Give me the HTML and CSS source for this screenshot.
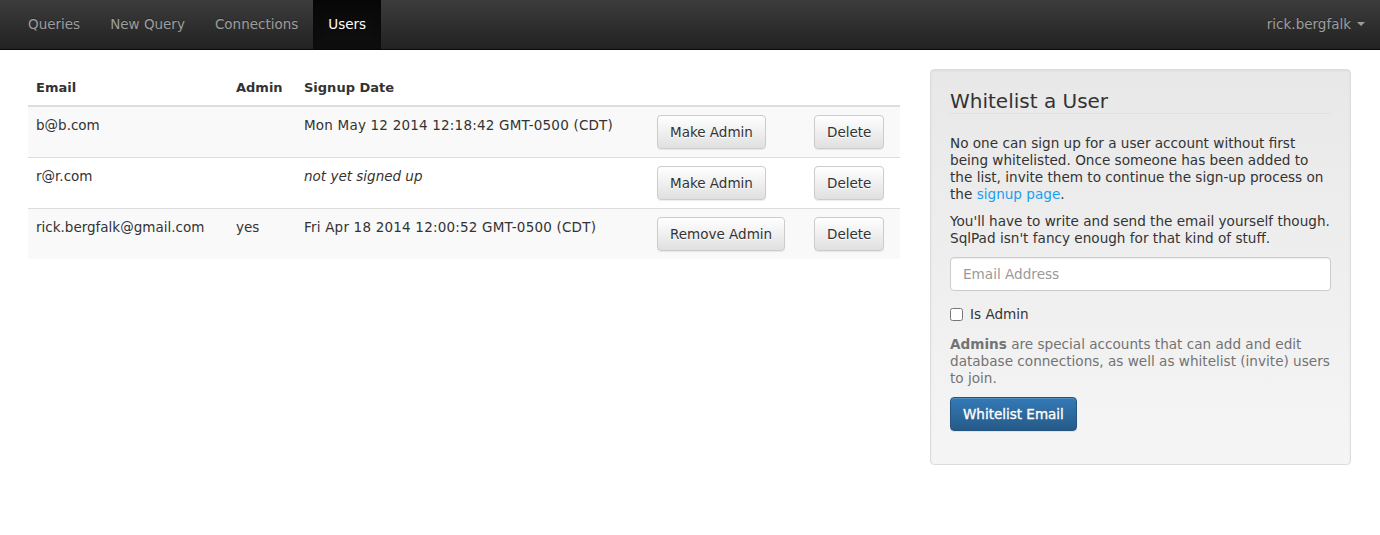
FILE: index.html
```html
<!DOCTYPE html>
<html>
<head>
<meta charset="utf-8">
<title>SqlPad - Users</title>
<link rel="stylesheet" href="styles.css">
</head>
<body>
<nav class="navbar">
  <ul class="nav-links">
    <li><a class="nav-link" href="#">Queries</a></li>
    <li><a class="nav-link" href="#">New Query</a></li>
    <li><a class="nav-link" href="#">Connections</a></li>
    <li><a class="nav-link active" href="#">Users</a></li>
  </ul>
  <a class="nav-link user-menu" href="#">rick.bergfalk <span class="caret"></span></a>
</nav>
<main class="content">
  <section class="users">
    <table class="user-table">
      <colgroup>
        <col class="c-email"><col class="c-admin"><col class="c-date"><col class="c-action"><col class="c-delete">
      </colgroup>
      <thead>
        <tr><th>Email</th><th>Admin</th><th>Signup Date</th><th></th><th></th></tr>
      </thead>
      <tbody>
        <tr class="striped">
          <td>b@b.com</td><td></td><td class="date">Mon May 12 2014 12:18:42 GMT-0500 (CDT)</td>
          <td><button class="btn">Make Admin</button></td><td><button class="btn">Delete</button></td>
        </tr>
        <tr>
          <td>r@r.com</td><td></td><td><em>not yet signed up</em></td>
          <td><button class="btn">Make Admin</button></td><td><button class="btn">Delete</button></td>
        </tr>
        <tr class="striped">
          <td>rick.bergfalk@gmail.com</td><td>yes</td><td class="date">Fri Apr 18 2014 12:00:52 GMT-0500 (CDT)</td>
          <td><button class="btn">Remove Admin</button></td><td><button class="btn">Delete</button></td>
        </tr>
      </tbody>
    </table>
  </section>
  <aside class="well">
    <h3 class="well-title">Whitelist a User</h3>
    <p class="para">No one can sign up for a user account without first being whitelisted. Once someone has been added to the list, invite them to continue the sign-up process on the <a class="link" href="#">signup page</a>.</p>
    <p class="para">You'll have to write and send the email yourself though. SqlPad isn't fancy enough for that kind of stuff.</p>
    <input class="email-input" type="text" placeholder="Email Address">
    <label class="check-row"><input class="check" type="checkbox"> Is Admin</label>
    <p class="help"><strong>Admins</strong> are special accounts that can add and edit database connections, as well as whitelist (invite) users to join.</p>
    <button class="btn btn-primary">Whitelist Email</button>
  </aside>
</main>
</body>
</html>
```
FILE: styles.css
```css
* { box-sizing: border-box; }
html, body { margin: 0; padding: 0; }
body {
  font-family: "DejaVu Sans", "Liberation Sans", sans-serif;
  font-size: 13.5px;
  line-height: 20px;
  color: #333;
  background: #fff;
}
.navbar {
  height: 50px;
  display: flex;
  justify-content: space-between;
  align-items: stretch;
  background: linear-gradient(to bottom, #3c3c3c 0%, #222 100%);
  border-bottom: 1px solid #080808;
  padding-left: 13px;
}
.nav-links { list-style: none; margin: 0; padding: 0; display: flex; }
.nav-links li { display: flex; }
.nav-link {
  display: flex;
  align-items: center;
  padding: 0 15px 1px;
  color: #9d9d9d;
  text-decoration: none;
  font-size: 13.5px;
  text-shadow: 0 -1px 0 rgba(0,0,0,.25);
}
.nav-link.active {
  color: #fff;
  background: linear-gradient(to bottom, #080808 0%, #0f0f0f 100%);
  box-shadow: inset 0 3px 9px rgba(0,0,0,.25);
}
.user-menu { padding-right: 15px; }
.caret {
  display: inline-block;
  width: 0; height: 0;
  margin-left: 6px;
  border-top: 4px solid #9d9d9d;
  border-left: 4px solid transparent;
  border-right: 4px solid transparent;
}
.content {
  display: flex;
  align-items: flex-start;
  gap: 30px;
  padding: 19px 29px 0 28px;
}
.users { width: 872px; flex: none; }
.user-table { width: 100%; border-collapse: collapse; table-layout: fixed; }
.c-email { width: 200px; }
.c-admin { width: 68px; }
.c-date { width: 353px; }
.c-action { width: 157px; }
.c-delete { width: 94px; }
.user-table th {
  text-align: left;
  font-weight: bold;
  font-size: 13px;
  padding: 9px 8px 7px;
  border-bottom: 2px solid #ddd;
  vertical-align: bottom;
}
.user-table td {
  padding: 8px;
  border-top: 1px solid #ddd;
  vertical-align: top;
}
.user-table td.date { letter-spacing: 0.2px; }
.user-table tbody tr:first-child td { border-top: 0; }
.user-table tr.striped { background: #f9f9f9; }
.btn {
  font-family: inherit;
  font-size: 13.5px;
  line-height: 20px;
  height: 34px;
  padding: 6px 12px;
  color: #333;
  border: 1px solid #ccc;
  border-radius: 4px;
  background: linear-gradient(to bottom, #fff 0%, #e0e0e0 100%);
  text-shadow: 0 1px 0 #fff;
  box-shadow: inset 0 1px 0 rgba(255,255,255,.15), 0 1px 1px rgba(0,0,0,.075);
  cursor: pointer;
}
.well {
  width: 421px;
  flex: none;
  padding: 19px 19px 33px;
  border: 1px solid #dcdcdc;
  border-radius: 4px;
  background: linear-gradient(to bottom, #e8e8e8 0%, #f5f5f5 100%);
  box-shadow: inset 0 1px 3px rgba(0,0,0,.05), 0 1px 0 rgba(255,255,255,.1);
  font-size: 13.6px;
  line-height: 17px;
}
.well-title {
  margin: 0 0 21px;
  padding: 0;
  font-size: 20px;
  line-height: 24px;
  font-weight: normal;
  color: #333;
  border-bottom: 1px solid #e1e1e1;
}
.para { margin: 0 0 10px; }
.link { color: #1a9ef0; text-decoration: none; }
.email-input {
  display: block;
  width: 100%;
  height: 34px;
  margin-top: 9px;
  padding: 6px 12px;
  font-family: inherit;
  font-size: 13.6px;
  color: #555;
  background: #fff;
  border: 1px solid #ccc;
  border-radius: 4px;
  box-shadow: inset 0 1px 1px rgba(0,0,0,.075);
}
.email-input::placeholder { color: #999; }
.check-row {
  display: flex;
  align-items: center;
  margin: 13px 0 12px;
  height: 20px;
}
.check {
  width: 13px; height: 13px;
  margin: 0 7px 0 0;
}
.help { margin: 0 0 10px; color: #737373; }
.help strong { font-weight: bold; }
.btn-primary {
  color: #fff;
  font-size: 13.5px;
  border-color: #245580;
  background: linear-gradient(to bottom, #337ab7 0%, #265a88 100%);
  text-shadow: 0 -1px 0 rgba(0,0,0,.2);
  -webkit-text-stroke: 0.35px #fff;
}
```
